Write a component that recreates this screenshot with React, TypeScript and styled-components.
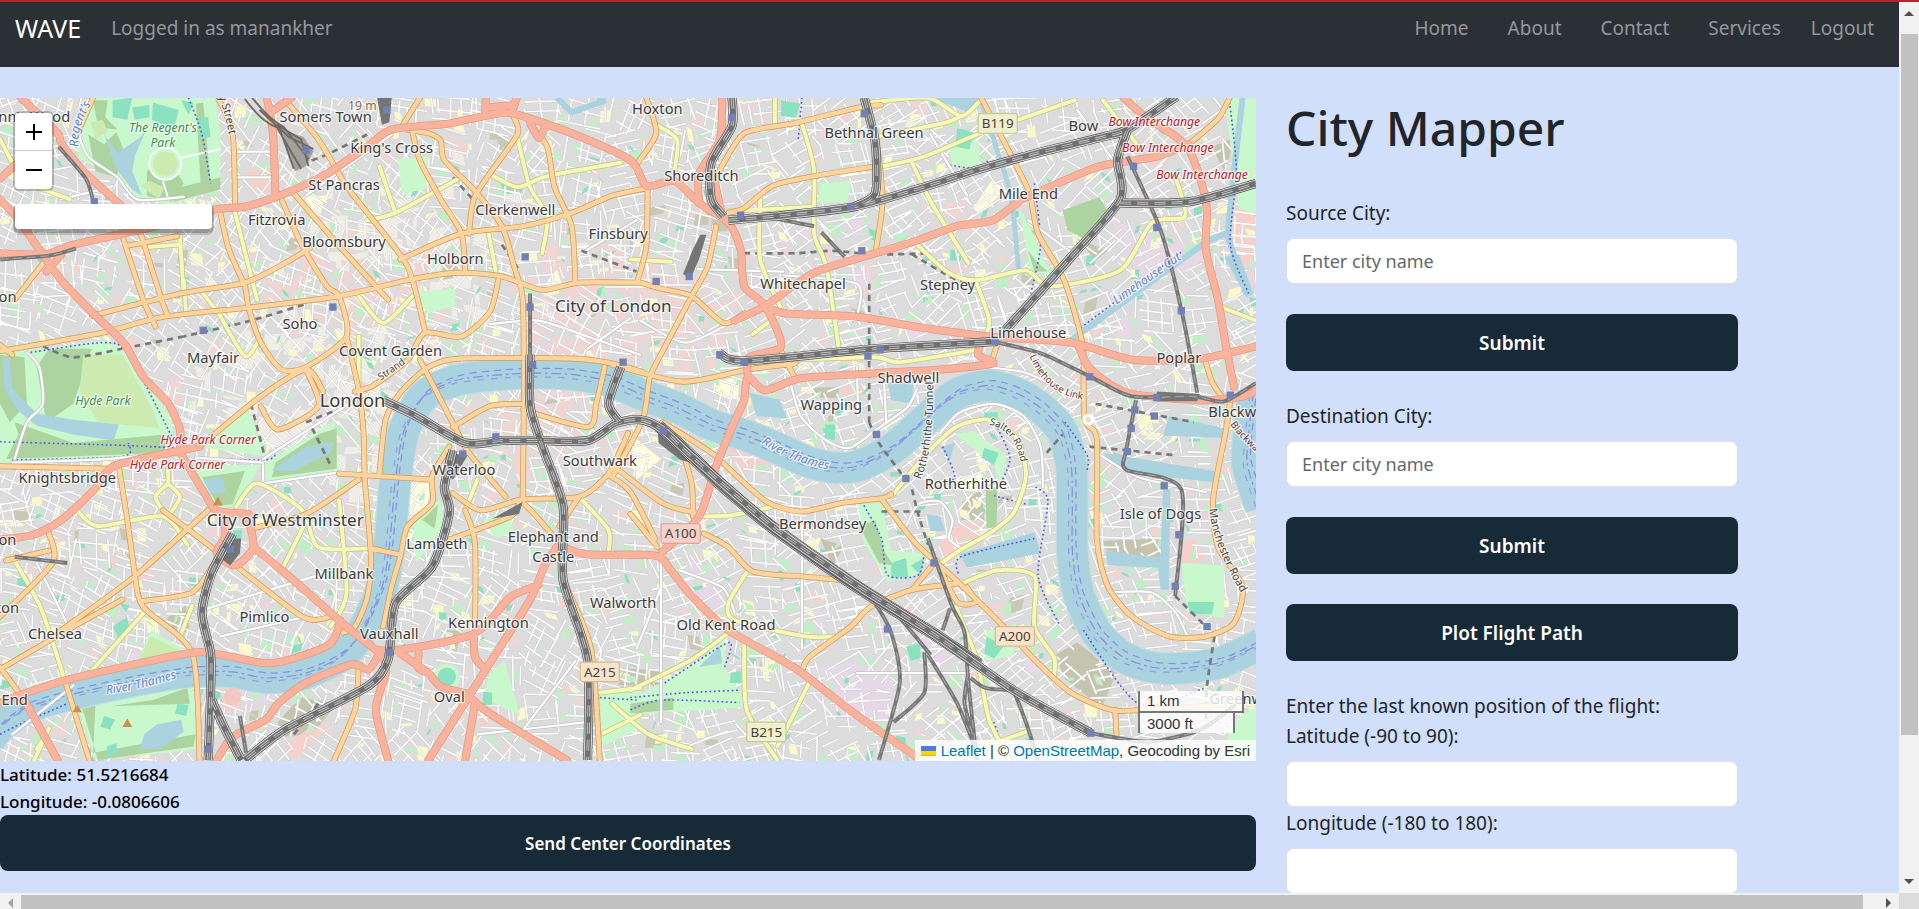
import React from "react";
import styled, { createGlobalStyle } from "styled-components";

const ui = `"Noto Sans", "Open Sans", sans-serif`;

const GlobalStyle = createGlobalStyle`
  *, *::before, *::after { box-sizing: border-box; }
  body {
    margin: 0;
    font-family: ${ui};
    font-size: 19px;
    line-height: 30px;
    color: #212529;
    background: #d2dffb;
  }
`;

/* ---------- page frame ---------- */

const Frame = styled.div`
  display: grid;
  grid-template-columns: minmax(0, 1fr) 20px;
  grid-template-rows: minmax(0, 1fr) 16px;
  height: 100vh;
  border-top: 2px solid #b3262c;
`;

const Viewport = styled.div`
  overflow: hidden;
`;

const Track = styled.div<{ $vertical?: boolean }>`
  display: flex;
  flex-direction: ${(p) => (p.$vertical ? "column" : "row")};
  align-items: center;
  background: #f1f1f1;
  padding: ${(p) => (p.$vertical ? "0 1px 0 2px" : "2px 0 0")};
`;

const Thumb = styled.div<{ $grow: number }>`
  flex: ${(p) => p.$grow} 1 0;
  align-self: stretch;
  background: #c1c1c1;
`;

const TrackRest = styled.div<{ $grow: number }>`
  flex: ${(p) => p.$grow} 1 0;
`;

const Arrow = styled.svg`
  flex: none;
`;

const Corner = styled.div`
  background: #dcdcdc;
`;

/* ---------- navigation ---------- */

const Navbar = styled.nav`
  display: flex;
  align-items: flex-start;
  height: 65px;
  padding: 6px 25px 0 15px;
  background: #2b3035;
  line-height: 40px;
`;

const Brand = styled.a`
  margin-right: 30px;
  font-size: 25px;
  color: #fff;
  text-decoration: none;
`;

const NavText = styled.span`
  color: #95989a;
`;

const NavLinks = styled.div`
  display: flex;
  gap: 39px;
  margin-left: auto;
`;

const NavLink = styled.a`
  color: #95989a;
  text-decoration: none;
`;

const LogoutLink = styled(NavLink)`
  margin-left: 30px;
`;

/* ---------- columns ---------- */

const Columns = styled.main`
  display: grid;
  grid-template-columns: 1256fr 643fr;
  padding-top: 31px;
`;

const MapColumn = styled.section`
  min-width: 0;
`;

const MapBox = styled.div`
  position: relative;
  height: 663px;
  overflow: hidden;
  background: #dddddd;
`;

const MapSvg = styled.svg`
  display: block;
  width: 100%;
  height: 100%;
`;

const Coordinate = styled.div`
  font-size: 17px;
  font-weight: 500;
  line-height: 27px;
  color: #000;
`;

const ActionButton = styled.button<{ $small?: boolean }>`
  display: block;
  width: 100%;
  height: ${(p) => (p.$small ? 56 : 57)}px;
  border: 0;
  border-radius: 8px;
  background: #172a38;
  color: #fff;
  font-family: ${ui};
  font-size: ${(p) => (p.$small ? 17 : 19)}px;
  font-weight: 600;
`;

const Side = styled.section`
  width: 100%;
  max-width: 482px;
  padding-left: 30px;
`;

const Title = styled.h1`
  margin: 0 0 40px;
  font-size: 48px;
  font-weight: 500;
  line-height: 60px;
`;

const Group = styled.div`
  display: flex;
  flex-direction: column;
  gap: 30px;
  margin-bottom: 30px;
`;

const Field = styled.div`
  display: flex;
  flex-direction: column;
  gap: 10px;
`;

const Fields = styled.div`
  display: flex;
  flex-direction: column;
  gap: 1px;
`;

const TextInput = styled.input`
  width: 100%;
  height: 46px;
  padding: 0 15px;
  border: 1px solid #dee2e6;
  border-radius: 8px;
  background: #fff;
  color: #212529;
  font-family: ${ui};
  font-size: 18px;
  &::placeholder { color: #63686d; opacity: 1; }
`;

/* ---------- controls over the map ---------- */

const ZoomControl = styled.div`
  position: absolute;
  left: 15px;
  top: 15px;
  width: 37px;
  border-radius: 4px;
  box-shadow: 0 0 0 2px rgba(0, 0, 0, 0.22);
  background: #fff;
`;

const ZoomButton = styled.button`
  display: flex;
  align-items: center;
  justify-content: center;
  width: 100%;
  height: 38px;
  padding: 0;
  border: 0;
  border-bottom: 1px solid #ccc;
  background: none;
  &:last-child { border-bottom: 0; }
`;

const SearchBox = styled.input`
  position: absolute;
  left: 15px;
  top: 106px;
  width: 197px;
  height: 25px;
  padding: 0 6px;
  border: 0;
  border-radius: 4px;
  background: #fff;
  box-shadow: 0 2px 0 2px rgba(0, 0, 0, 0.2), 0 5px 0 1px rgba(0, 0, 0, 0.15);
`;

const Scale = styled.div`
  position: absolute;
  right: 12px;
  bottom: 28px;
  width: 106px;
  font: 15px/18px "Liberation Sans", Arial, sans-serif;
  color: #333;
`;

const ScaleLine = styled.div<{ $lower?: boolean }>`
  width: ${(p) => (p.$lower ? 97 : 106)}px;
  height: 22px;
  padding: ${(p) => (p.$lower ? "2px 0 0 7px" : "1px 0 0 7px")};
  border: solid #777;
  border-width: ${(p) => (p.$lower ? "2px 2px 0" : "0 2px 2px")};
  margin-top: ${(p) => (p.$lower ? "-2px" : "0")};
  background: rgba(255, 255, 255, 0.8);
`;

const Attribution = styled.div`
  position: absolute;
  right: 0;
  bottom: 0;
  display: flex;
  align-items: center;
  gap: 5px;
  height: 21px;
  padding: 0 6px;
  background: rgba(255, 255, 255, 0.8);
  font: 15px/21px "Liberation Sans", Arial, sans-serif;
  color: #333;
  white-space: pre;
  a { color: #0078a8; text-decoration: none; }
`;

/* ---------- map data ---------- */

type Line = number[];

// Smooth curve through a flat list of x, y pairs.
const curve = (p: Line): string => {
  const n = p.length / 2;
  const at = (i: number) => {
    const k = Math.max(0, Math.min(n - 1, i));
    return [p[k * 2], p[k * 2 + 1]];
  };
  let d = `M${p[0]} ${p[1]}`;
  for (let i = 0; i < n - 1; i++) {
    const [a, b, c, e] = [at(i - 1), at(i), at(i + 1), at(i + 2)];
    const f = (v: number) => v.toFixed(1);
    d += `C${f(b[0] + (c[0] - a[0]) / 8)} ${f(b[1] + (c[1] - a[1]) / 8)} ${f(c[0] - (e[0] - b[0]) / 8)} ${f(c[1] - (e[1] - b[1]) / 8)} ${c[0]} ${c[1]}`;
  }
  return d;
};
const curves = (l: Line[]) => l.map(curve).join("");
const area = (l: Line[]) =>
  l.map((p) => "M" + p.reduce((s, v, i) => s + (i ? (i % 2 ? " " : "L") : "") + v, "") + "Z").join("");

let seed = 20231;
const rnd = () => {
  seed = (seed * 1664525 + 1013904223) % 4294967296;
  return seed / 4294967296;
};

// Small street grids, each turned its own way.
const makeStreets = () => {
  let d = "";
  for (let cy = 90; cy < 630; cy += 33)
    for (let cx = 8; cx < 1035; cx += 36) {
      const a = rnd() * 0.9 - 0.45 + Math.sin(cx / 170) * 0.5;
      const ox = cx + rnd() * 10 - 5;
      const oy = cy + rnd() * 10 - 5;
      const put = (x1: number, y1: number, x2: number, y2: number) => {
        const r = (x: number, y: number) =>
          `${(ox + x * Math.cos(a) - y * Math.sin(a)).toFixed(1)} ${(oy + x * Math.sin(a) + y * Math.cos(a)).toFixed(1)}`;
        d += `M${r(x1, y1)}L${r(x2, y2)}`;
      };
      for (let y = -18; y < 19; y += 6 + rnd() * 6) put(-20 + rnd() * 16, y, 20 - rnd() * 16, y + rnd() * 3);
      for (let x = -20; x < 21; x += 6 + rnd() * 9) put(x, -18 + rnd() * 18, x + rnd() * 3, 18 - rnd() * 18);
    }
  return d;
};
const makePatches = (n: number, size: number, cx?: number, cy?: number, rad = 100) => {
  let d = "";
  for (let i = 0; i < n; i++) {
    const x = cx === undefined ? rnd() * 1026 : cx + (rnd() + rnd() - 1) * rad;
    const y = cy === undefined ? 80 + rnd() * 542 : cy + (rnd() + rnd() - 1) * rad * 0.6;
    const w = 2 + rnd() * size;
    const h = 2 + rnd() * size;
    const k = rnd() * 6 - 3;
    d += `M${x.toFixed(1)} ${y.toFixed(1)}l${w.toFixed(1)} ${k.toFixed(1)}l${k.toFixed(1)} ${h.toFixed(1)}l${(-w).toFixed(1)} ${(-k).toFixed(1)}z`;
  }
  return d;
};
const streets = makeStreets();
const pinkPatches = makePatches(330, 10) + makePatches(150, 14, 515, 255, 110) + makePatches(70, 12, 440, 340, 80) + makePatches(60, 12, 280, 240, 90);
const greenPatches = makePatches(620, 9);
const tealPatches = makePatches(130, 7);
const creamPatches = makePatches(360, 10);
const khakiPatches = makePatches(60, 12);
const beigePatches = makePatches(110, 15, 260, 330, 130) + makePatches(90, 15, 330, 200, 150);
const tealOverlay = makePatches(110, 4);
const creamOverlay = makePatches(150, 5);
const greenOverlay = makePatches(200, 5);
const lilacPatches = makePatches(28, 13);

const river: Line[] = [
  [-8, 604, 0, 594, 22, 578, 60, 567, 110, 556, 155, 549, 190, 549, 217, 554, 250, 550, 280, 535, 298, 512, 312, 480, 318, 447, 323, 392, 330, 352, 346, 324, 372, 311, 400, 307, 433, 305, 467, 306, 500, 312, 523, 322, 555, 334, 581, 347, 607, 355, 632, 365, 659, 377, 680, 382, 700, 381, 727, 368, 754, 345, 768, 332, 785, 320, 809, 315, 832, 322, 852, 335, 868, 353, 875, 380, 876, 410, 876, 449, 881, 485, 896, 517, 916, 536, 940, 545, 965, 546, 998, 541, 1030, 526],
  [1024, 320, 1020, 355, 1019, 380, 1030, 415],
];

const primary: Line[] = [
  [17, 80, 47, 109, 50, 117, 67, 139, 90, 160, 100, 169],
  [0, 163, 13, 177, 30, 201, 50, 229, 73, 253, 93, 272, 103, 283, 117, 308, 137, 329, 147, 351, 147, 368, 152, 378, 167, 403, 177, 417, 203, 420],
  [183, 421, 184, 438, 177, 452, 192, 462, 207, 447, 202, 421], [207, 447, 235, 470, 267, 498, 283, 512, 307, 531],
  [0, 207, 37, 208, 60, 200, 127, 185, 177, 171, 200, 169, 233, 158, 267, 142, 300, 120, 320, 106, 367, 101, 400, 94, 420, 93, 467, 109, 515, 131, 528, 152, 551, 148, 571, 166, 595, 182, 605, 204, 608, 234, 625, 250, 638, 283, 612, 292, 611, 308],
  [38, 222, 50, 208], [218, 80, 223, 109, 225, 158], [221, 92, 238, 80], [0, 146, 18, 130], [397, 80, 396, 94], [422, 80, 418, 93],
  [397, 88, 420, 86], [432, 98, 440, 113, 446, 102],
  [590, 79, 588, 114, 571, 142, 571, 163], [583, 144, 590, 178],
  [600, 262, 625, 250, 665, 223, 715, 207, 748, 197, 781, 185, 811, 180, 835, 163, 855, 154, 898, 136, 945, 128, 971, 118],
  [918, 80, 935, 95, 961, 112, 971, 122, 980, 144, 986, 172, 985, 204, 995, 245, 1001, 280, 1008, 316],
  [625, 250, 641, 256, 701, 259, 748, 267, 808, 275, 875, 280, 925, 294, 981, 293, 1026, 283],
  [608, 327, 611, 308, 625, 319, 655, 309, 715, 305, 768, 302, 811, 297, 799, 290, 802, 278],
  [881, 283, 891, 302, 921, 321, 981, 327, 1015, 324, 1026, 319],
  [608, 327, 598, 349, 585, 381, 571, 422, 541, 451],
  [460, 447, 480, 453, 535, 454, 548, 466, 565, 487, 595, 515, 648, 545, 698, 583, 748, 618],
  [455, 447, 445, 462, 433, 490, 400, 542, 383, 569, 350, 621], [440, 478, 417, 488, 387, 518, 327, 531, 307, 531], [387, 518, 388, 537, 396, 546],
  [383, 569, 400, 583, 463, 621], [388, 575, 380, 621], [327, 534, 350, 550, 360, 561, 383, 567], [313, 535, 315, 550, 307, 580, 317, 621],
  [310, 534, 301, 547, 287, 543, 250, 558, 227, 575, 217, 588, 190, 602, 177, 621], [342, 534, 342, 546, 350, 550],
  [278, 507, 270, 526, 240, 538, 217, 542, 180, 535, 153, 534, 53, 556, 0, 574], [20, 572, 47, 621],
  [0, 441, 27, 437, 50, 425, 77, 400, 93, 381, 143, 369, 163, 365],
];

const secondary: Line[] = [
  [76, 80, 62, 112], [178, 80, 190, 109, 192, 169], [180, 174, 187, 204, 200, 234, 203, 251, 213, 280, 230, 302, 250, 300, 283, 275, 277, 242, 267, 234, 247, 201, 230, 163],
  [240, 158, 277, 201, 317, 245], [233, 82, 260, 114, 283, 152, 300, 174, 333, 218, 347, 270], [0, 287, 83, 272, 133, 259, 207, 251, 277, 242, 333, 229, 373, 223, 410, 226, 443, 237, 473, 231, 523, 231],
  [75, 258, 147, 240, 200, 231, 233, 215, 253, 203], [343, 80, 328, 104], [336, 104, 343, 131, 360, 163, 377, 191, 380, 223], [333, 106, 350, 109, 360, 115, 363, 131, 387, 155, 410, 185, 420, 218, 427, 245, 428, 321, 427, 408],
  [327, 212, 377, 191, 427, 185, 467, 174, 500, 160, 528, 154], [418, 93, 423, 109, 400, 142, 387, 163, 383, 191], [433, 103, 447, 120, 453, 153, 467, 185, 470, 230], [528, 80, 536, 109, 521, 133], [529, 152, 528, 201, 521, 229],
  [523, 231, 540, 236, 565, 242, 591, 264, 608, 256], [585, 185, 578, 218, 565, 242, 545, 280, 531, 308, 525, 343, 500, 390], [500, 298, 558, 312, 611, 302, 650, 297], [637, 285, 650, 310],
  [588, 139, 608, 109, 648, 101, 701, 88, 720, 86], [595, 174, 608, 170, 631, 152, 665, 144, 715, 136], [715, 106, 721, 163, 715, 207],
  [801, 79, 828, 131, 841, 158, 848, 191, 868, 226, 881, 267, 885, 289, 886, 343, 896, 359, 896, 441, 905, 479, 925, 504, 955, 520, 985, 520, 1008, 509, 1015, 479, 995, 447, 991, 408, 1001, 354, 1005, 327],
  [971, 118, 995, 97, 1005, 79], [984, 293, 990, 312, 998, 324], [815, 280, 810, 296],
  [541, 345, 581, 370, 605, 392, 628, 411, 655, 418, 688, 411, 721, 407, 728, 404], [721, 409, 748, 444, 781, 474, 815, 507, 848, 542, 875, 566, 908, 580, 935, 580, 1000, 576],
  [911, 580, 912, 600], [781, 477, 745, 482, 711, 496, 695, 512, 661, 537, 655, 550], [745, 482, 765, 458], [575, 436, 595, 447, 615, 467, 655, 471, 688, 474], [768, 465, 782, 492, 797, 492, 790, 480],
  [500, 380, 541, 411, 568, 419], [555, 360, 565, 395, 566, 422], [515, 420, 537, 447],
  [163, 365, 213, 324, 250, 302, 264, 320], [213, 332, 227, 351, 260, 332, 250, 302], [290, 320, 305, 315, 333, 294, 347, 272, 377, 275, 400, 255, 407, 229],
  [310, 387, 315, 343, 327, 321, 350, 300, 377, 293, 467, 293, 500, 297, 525, 304], [283, 275, 293, 319, 297, 354, 298, 392, 303, 455, 300, 488, 290, 512, 280, 517], [277, 387, 353, 392], [293, 392, 250, 420, 205, 432],
  [367, 365, 353, 389, 353, 411, 333, 430, 327, 455, 320, 479, 313, 512], [343, 294, 370, 346, 383, 370, 413, 406], [370, 349, 400, 332, 427, 330], [427, 335, 480, 349, 487, 330, 494, 300],
  [370, 403, 393, 417, 427, 408, 473, 406, 497, 387, 513, 354], [497, 388, 515, 402, 535, 440], [473, 406, 457, 430], [367, 441, 417, 422, 427, 411, 457, 444], [380, 417, 388, 444, 388, 518], [463, 480, 483, 531, 490, 621], [303, 448, 326, 453],
  [97, 381, 104, 425, 110, 468, 117, 496, 157, 534, 163, 621], [50, 515, 110, 471, 170, 417], [133, 417, 187, 458, 247, 504, 270, 504], [117, 491, 157, 484, 177, 457], [0, 381, 90, 383],
  [0, 547, 60, 512, 100, 490], [0, 545, 22, 575], [53, 556, 73, 621], [293, 545, 290, 580, 273, 621], [40, 436, 43, 460, 0, 504], [40, 450, 5, 458], [100, 193, 117, 245, 127, 267], [115, 191, 132, 245, 137, 258], [103, 201, 145, 193],
  [12, 245, 37, 213], [0, 282, 10, 290],
];

const tertiary: Line[] = [
  [192, 174, 210, 245], [147, 193, 150, 240], [120, 202, 147, 200], [300, 180, 323, 174, 373, 147], [310, 136, 323, 174], [403, 144, 423, 153, 447, 144, 507, 133], [423, 114, 433, 153, 447, 177, 443, 207], [0, 114, 20, 147, 57, 163],
  [399, 190, 405, 222], [633, 80, 633, 103], [534, 101, 553, 114, 551, 140], [655, 101, 665, 139, 665, 191, 675, 218, 685, 283], [621, 163, 621, 212, 638, 252], [591, 173, 665, 169], [711, 84, 758, 80, 785, 95, 801, 82], [715, 112, 770, 101, 785, 95],
  [721, 136, 755, 128, 801, 109, 878, 82], [745, 133, 761, 166, 791, 215], [748, 199, 775, 223, 798, 229, 838, 221, 858, 234, 915, 221, 941, 182, 968, 177, 961, 147], [798, 232, 808, 261, 805, 276], [615, 273, 638, 256], [648, 294, 715, 292, 735, 296, 798, 286],
  [901, 82, 928, 117], [995, 250, 1026, 262], [728, 406, 755, 373, 781, 349, 808, 343, 831, 359, 838, 389, 828, 419, 808, 436, 785, 449, 765, 463], [571, 422, 598, 421, 631, 414], [611, 466, 595, 493, 601, 507, 658, 520, 681, 520],
  [515, 564, 565, 539, 595, 517], [608, 523, 610, 580, 635, 621], [661, 558, 635, 610], [500, 575, 530, 600, 565, 612], [785, 477, 815, 466, 845, 471, 845, 512, 861, 537, 861, 553], [781, 496, 798, 539, 808, 588, 825, 621], [805, 610, 838, 598],
  [63, 417, 80, 430, 133, 422, 153, 445], [137, 384, 137, 395, 127, 406, 137, 420, 147, 406, 137, 395], [177, 253, 200, 291, 213, 275], [150, 229, 152, 256], [166, 240, 180, 258], [293, 242, 313, 264, 337, 242], [293, 275, 293, 319],
  [193, 414, 210, 395, 247, 417, 260, 447, 303, 448], [248, 430, 230, 466], [277, 409, 283, 485, 270, 512], [10, 455, 33, 496, 53, 556], [120, 498, 73, 550], [157, 495, 147, 520], [390, 392, 380, 417], [473, 406, 497, 433, 497, 452],
  [490, 566, 523, 562], [493, 599, 523, 584], [40, 595, 28, 621], [30, 612, 38, 600], [515, 212, 548, 214], [1005, 335, 1015, 340],
];

const whiteMain: Line[] = [
  [192, 124, 222, 124], [50, 163, 82, 155, 92, 152], [215, 375, 285, 330, 300, 322], [10, 378, 90, 375, 143, 369], [160, 374, 215, 378], [215, 380, 215, 395], [215, 395, 277, 386], [22, 288, 32, 300, 35, 330, 22, 345, 12, 375], [523, 262, 560, 280, 600, 262],
  [400, 265, 440, 262, 480, 275, 523, 290], [515, 260, 480, 285], [420, 606, 470, 540], [160, 500, 260, 470], [180, 520, 245, 505], [540, 440, 540, 590], [740, 430, 750, 412, 768, 410, 778, 425, 775, 440, 785, 448],
  [645, 310, 654, 340, 675, 360, 694, 366, 716, 351, 741, 333, 749, 318], [768, 354, 784, 337, 812, 330, 836, 340, 850, 365, 852, 398], [806, 300, 836, 304, 858, 314, 870, 325], [896, 370, 930, 390, 985, 402], [905, 484, 940, 484, 960, 500, 970, 520], [655, 430, 655, 530], [700, 550, 790, 550], [570, 220, 640, 222], [640, 225, 700, 232, 700, 260],
  [840, 180, 880, 210], [760, 110, 790, 160], [880, 90, 930, 160], [30, 460, 60, 520], [10, 600, 60, 560], [390, 600, 480, 590], [555, 466, 590, 480, 600, 500], [540, 480, 520, 530], [520, 180, 470, 210], [722, 310, 724, 345], [700, 300, 701, 340], [192, 145, 222, 145], [250, 160, 320, 110],
  [72, 82, 64, 105, 72, 128, 96, 145, 112, 163, 150, 161],
];

const railMain: Line[] = [
  [313, 327, 340, 340, 380, 362, 410, 360, 440, 360, 480, 360, 503, 346, 523, 343, 541, 351, 565, 373, 631, 430, 701, 479, 761, 517, 828, 564, 891, 599],
  [433, 290, 433, 332, 443, 365, 460, 414, 460, 474, 480, 539, 480, 621], [507, 300, 497, 330, 507, 346], [370, 368, 363, 398, 367, 419, 353, 463, 323, 493, 317, 539, 300, 561, 233, 596, 200, 621],
  [190, 436, 173, 468, 165, 501, 172, 534, 172, 566, 170, 621], [173, 572, 183, 594, 197, 621], [598, 80, 598, 103, 581, 133, 581, 163, 591, 177],
  [595, 180, 641, 176, 698, 169, 748, 155, 798, 139, 848, 125, 901, 112, 921, 106, 961, 79], [706, 80, 715, 117, 715, 158, 698, 169], [921, 106, 913, 131, 915, 163, 875, 210, 821, 270], [915, 166, 971, 165, 1026, 150], [588, 289, 608, 295, 715, 285, 815, 279],
];
const viaduct: Line[] = [[538, 348, 560, 368, 588, 395, 631, 431, 701, 480, 761, 517, 800, 543]];
const railThin: Line[] = [
  [433, 240, 433, 297], [815, 280, 851, 289, 891, 308, 925, 324, 975, 324, 1000, 328, 1026, 313], [921, 128, 948, 188, 965, 253, 978, 321], [928, 327, 920, 368, 920, 384, 965, 400, 960, 487],
  [758, 440, 765, 460, 778, 496, 788, 517, 791, 558, 798, 621], [715, 493, 728, 517, 735, 558, 718, 621], [758, 535, 782, 575, 798, 615], [755, 533, 755, 566, 730, 590], [776, 497, 770, 515], [791, 550, 788, 575, 798, 612], [793, 554, 805, 562, 828, 564],
  [828, 564, 838, 590, 848, 621], [711, 483, 735, 505, 760, 535], [891, 599, 938, 606, 981, 596, 1010, 575], [625, 177, 665, 185], [671, 190, 690, 210], [196, 585, 201, 615], [48, 120, 70, 146, 76, 164],
  [0, 212, 40, 209, 62, 203], [12, 455, 55, 460],
];
const railDashed: Line[] = [
  [608, 207, 650, 207, 680, 205, 715, 208, 760, 207], [745, 208, 780, 228, 800, 232], [745, 400, 750, 420, 758, 445], [710, 345, 718, 362, 740, 392], [960, 487, 985, 512], [992, 520, 986, 560, 985, 590], [895, 330, 975, 345], [890, 365, 960, 372],
  [35, 283, 60, 292, 100, 285], [150, 275, 110, 283], [248, 249, 205, 262, 150, 275], [205, 330, 216, 372], [255, 350, 270, 380], [250, 345, 275, 335], [300, 110, 270, 125, 250, 133], [410, 200, 425, 222], [475, 205, 520, 222], [260, 575, 240, 600],
  [370, 145, 388, 165], [855, 370, 868, 355], [710, 232, 710, 345], [720, 418, 752, 418],
];

const parks: Line[] = [
  [72, 80, 60, 108, 65, 130, 100, 147, 113, 163, 140, 167, 180, 155, 180, 109, 176, 80],
  [0, 289, 87, 278, 103, 286, 140, 343, 143, 362, 100, 373, 0, 379], [163, 365, 203, 335, 217, 373], [217, 378, 273, 344, 277, 384, 217, 394], [157, 380, 213, 380, 193, 413, 177, 416],
  [63, 575, 120, 568, 157, 556, 163, 612, 77, 621], [515, 572, 568, 542, 592, 523, 592, 545, 606, 568, 606, 578, 515, 584], [701, 412, 721, 411, 728, 450, 757, 452, 745, 472, 725, 475, 706, 444],
  [965, 460, 1000, 462, 1000, 505, 970, 500], [123, 515, 150, 530, 112, 542], [670, 150, 695, 148, 692, 166, 668, 165], [775, 120, 800, 115, 800, 138, 778, 136], [836, 175, 848, 200, 858, 225, 842, 222, 832, 170],
  [333, 239, 372, 236, 372, 250, 350, 256], [400, 550, 412, 540, 425, 585, 395, 570], [1005, 590, 1026, 578, 1026, 621, 1000, 621], [780, 355, 795, 352, 822, 372, 818, 400, 812, 380], [490, 568, 523, 562, 523, 595, 492, 610],
  [325, 130, 350, 128, 348, 155, 328, 158], [1000, 80, 1026, 80, 1026, 175, 1012, 170], [395, 425, 415, 418, 420, 435, 405, 440], [337, 425, 360, 408, 362, 430, 340, 460], [806, 515, 830, 510, 828, 536, 804, 540],
];
const woods: Line[] = [
  [72, 110, 85, 118, 95, 108, 102, 125, 95, 145, 78, 140], [76, 82, 88, 82, 86, 96, 96, 106, 80, 104], [120, 140, 135, 125, 150, 150, 140, 165, 120, 160], [160, 85, 166, 84, 172, 150, 164, 152], [140, 155, 180, 145, 180, 155, 142, 165], [0, 290, 20, 292, 22, 330, 8, 345, 0, 330], [40, 285, 75, 285, 60, 330, 38, 345, 30, 300],
  [12, 345, 60, 362, 135, 355, 135, 370, 5, 375, 15, 355], [225, 378, 260, 355, 275, 350, 275, 383, 222, 390], [165, 390, 200, 385, 190, 412, 178, 413], [67, 578, 78, 575, 76, 615, 160, 600, 158, 610, 80, 621], [90, 577, 125, 572, 153, 562, 155, 575, 120, 576],
  [868, 172, 898, 161, 905, 173, 885, 195, 872, 188], [702, 430, 715, 425, 722, 450, 730, 462, 718, 460], [805, 400, 815, 398, 814, 430, 806, 432], [840, 205, 848, 215, 856, 222, 845, 222], [515, 575, 550, 570, 550, 580, 515, 583], [345, 425, 358, 412, 355, 432],
];
const meadows: Line[] = [[68, 290, 100, 290, 125, 335, 130, 350, 80, 345, 65, 320], [112, 541, 123, 520, 148, 532], [74, 100, 84, 98, 88, 108, 78, 114], [115, 152, 122, 148, 134, 153, 130, 163]];
const pitches: Line[] = [[92, 82, 108, 80, 104, 98, 92, 96], [108, 88, 122, 86, 122, 96, 110, 98], [125, 84, 146, 90, 142, 106, 124, 98], [148, 82, 158, 84, 154, 94], [162, 96, 170, 96, 172, 112, 164, 114], [92, 512, 104, 504, 106, 516, 98, 524], [97, 492, 106, 495, 103, 500], [728, 460, 740, 456, 742, 472, 728, 472], [744, 462, 755, 456, 752, 470], [970, 492, 992, 492, 990, 502, 972, 502], [597, 550, 605, 548, 606, 558, 596, 558], [782, 105, 795, 108, 792, 122, 780, 120], [804, 337, 815, 337, 815, 343, 804, 343], [804, 366, 816, 370, 812, 380, 802, 374], [806, 520, 820, 528, 812, 538, 804, 534], [740, 528, 752, 526, 752, 538, 744, 540], [395, 565, 402, 566, 402, 576, 394, 576], [85, 585, 94, 588, 90, 596, 82, 594], [87, 610, 95, 607, 96, 616, 88, 618], [145, 575, 154, 576, 152, 585, 143, 583], [638, 82, 654, 85, 650, 96, 638, 95], [674, 347, 682, 347, 682, 360, 674, 358]];
const docks: Line[] = [
  [784, 453, 845, 435, 850, 452, 790, 464], [903, 450, 948, 456, 950, 400, 956, 400, 955, 482, 948, 482, 946, 464, 905, 462], [901, 370, 992, 385, 992, 394, 918, 386], [955, 340, 1000, 350, 1000, 358, 950, 356], [2, 293, 8, 293, 10, 318, 30, 338, 60, 343, 97, 347, 93, 360, 60, 355, 30, 348, 14, 335, 4, 318],
  [222, 384, 250, 365, 273, 361, 270, 370, 240, 385], [85, 110, 96, 125, 115, 112, 120, 105, 110, 128, 108, 140, 116, 160, 108, 155, 95, 138, 88, 118], [166, 392, 182, 390, 184, 402, 172, 404], [118, 600, 128, 592, 148, 588, 150, 598, 130, 612, 114, 612], [571, 545, 588, 528, 590, 542],
  [612, 321, 637, 327, 643, 342, 618, 340], [725, 313, 746, 313, 745, 330, 728, 327], [757, 420, 768, 422, 772, 434, 760, 434], [760, 80, 800, 80, 792, 92], [1000, 210, 1012, 208, 1024, 240, 1018, 243], [768, 365, 780, 362, 776, 376],
];
const industrial: Line[] = [[910, 180, 945, 195, 985, 200, 975, 222, 920, 225], [648, 550, 690, 540, 730, 552, 728, 590, 690, 590, 665, 562], [565, 452, 592, 495, 590, 500, 560, 480], [195, 560, 225, 560, 225, 572, 200, 574], [750, 510, 780, 520, 770, 545, 750, 535]];
const brown: Line[] = [[880, 525, 912, 550, 900, 578, 870, 555, 862, 535], [900, 442, 948, 440, 948, 458, 905, 450], [136, 505, 152, 495, 155, 515, 145, 518], [786, 410, 802, 400, 804, 425, 785, 425], [227, 590, 245, 570, 275, 575, 255, 600, 230, 602], [510, 546, 540, 548, 540, 560, 505, 560], [670, 440, 690, 446, 680, 462], [880, 195, 905, 205, 895, 213], [360, 515, 378, 515, 372, 534], [662, 317, 686, 316, 684, 325, 664, 325], [990, 120, 1010, 112, 1000, 140]];
const pinkZones: Line[] = [[1000, 190, 1012, 168, 1026, 174, 1026, 215, 1010, 218], [765, 448, 775, 460, 800, 442, 805, 425, 780, 430], [963, 444, 975, 440, 985, 458, 965, 463], [700, 480, 715, 480, 715, 495], [180, 565, 195, 565, 197, 580, 182, 582], [232, 610, 255, 593, 262, 600, 240, 621], [595, 360, 628, 368, 622, 388, 600, 380], [185, 80, 193, 82, 196, 92, 186, 94], [390, 583, 403, 585, 395, 598], [202, 140, 223, 136, 220, 158, 205, 155], [687, 316, 708, 314, 708, 324, 689, 324]];
const creamZones: Line[] = [[334, 395, 352, 395, 348, 420, 334, 428], [785, 390, 805, 385, 800, 402, 780, 400], [250, 160, 265, 160, 262, 175, 248, 172], [447, 230, 455, 220, 460, 236, 448, 240], [0, 430, 20, 430, 15, 425, 0, 425], [795, 170, 810, 148, 822, 155, 800, 175], [515, 355, 540, 375, 520, 392], [796, 362, 812, 372, 806, 384, 798, 378], [584, 312, 604, 308, 603, 327, 586, 322]];

const bluePaths: Line[] = [
  [25, 288, 85, 280, 105, 290, 143, 362], [0, 361, 100, 364, 143, 366], [10, 376, 100, 373, 105, 362], [160, 374, 215, 376, 225, 372], [515, 570, 560, 566, 604, 564], [540, 560, 595, 525, 592, 545], [515, 580, 540, 572, 604, 574], [704, 410, 720, 440, 725, 470, 750, 470, 755, 452],
  [770, 365, 780, 390, 765, 395], [846, 398, 856, 410, 848, 470, 865, 510], [880, 270, 920, 240, 965, 206], [845, 150, 850, 200, 842, 240], [845, 440, 785, 455, 783, 470], [885, 515, 930, 575, 985, 562], [1004, 80, 1010, 140, 1005, 200, 1020, 240], [0, 600, 20, 590, 55, 575],
  [655, 80, 652, 115], [154, 80, 165, 110, 172, 150], [812, 590, 822, 620], [776, 135, 800, 138, 808, 130], [490, 570, 520, 572], [815, 350, 825, 375, 815, 400], [870, 345, 888, 372, 888, 385], [812, 405, 838, 412],
];

const stations: Line = [250, 123, 166, 270, 272, 251, 433, 251, 316, 90, 598, 96, 706, 93, 605, 176, 695, 169, 704, 205, 536, 230, 563, 226, 588, 290, 608, 296, 709, 291, 719, 286, 813, 279, 926, 136, 945, 186, 965, 254, 890, 308, 945, 325, 1005, 323, 435, 298, 509, 296, 405, 357, 378, 371, 188, 449, 318, 533, 170, 612, 542, 352, 716, 355, 740, 391, 763, 460, 725, 514, 891, 599, 927, 335, 943, 340, 924, 350, 921, 369, 951, 397, 963, 437, 960, 479, 986, 512, 429, 210, 77, 165];

type Label = [string, number, number, number?];
const labels: Label[] = [
  ["Hoxton", 537, 93], ["Bethnal Green", 714, 113], ["Bow", 885, 107], ["Somers Town", 266, 100], ["King's Cross", 320, 125], ["St Pancras", 281, 155], ["Shoreditch", 573, 148], ["Clerkenwell", 421, 176], ["Fitzrovia", 226, 184], ["Finsbury", 505, 195],
  ["Bloomsbury", 281, 202], ["Holborn", 372, 216], ["Mile End", 840, 163], ["Whitechapel", 656, 236], ["Stepney", 774, 237], ["City of London", 501, 255, 14], ["Soho", 245, 269], ["Limehouse", 840, 276], ["Mayfair", 174, 297], ["Covent Garden", 319, 291],
  ["Poplar", 963, 297], ["Shadwell", 742, 313], ["London", 288, 333, 15], ["Wapping", 679, 335], ["Blackwall", 1013, 341], ["Knightsbridge", 55, 395], ["Waterloo", 379, 388], ["Southwark", 490, 381], ["Rotherhithe", 789, 400], ["City of Westminster", 233, 430, 14],
  ["Lambeth", 357, 449], ["Elephant and", 452, 443], ["Castle", 452, 459], ["Bermondsey", 672, 432], ["Isle of Dogs", 948, 424], ["Millbank", 281, 473], ["Walworth", 509, 497], ["Pimlico", 216, 508], ["Old Kent Road", 593, 515], ["Chelsea", 45, 522],
  ["Vauxhall", 318, 522], ["Kennington", 399, 513], ["Oval", 367, 574], ["End", 12, 576], ["on", 6, 445], ["ton", 6, 501], ["ton", 4, 247], ["nn's Wood", 28, 100], ["Greenwich", 1018, 575],
];
const redLabels: Label[] = [["Bow Interchange", 943, 103], ["Bow Interchange", 954, 124], ["Bow Interchange", 982, 146], ["Hyde Park Corner", 170, 363], ["Hyde Park Corner", 145, 383]];
const shields: [string, number, number, string, string][] = [["B119", 815, 101, "#eff0cf", "#c5c98e"], ["A100", 556, 436, "#f3d1ca", "#e0a294"], ["A200", 829, 520, "#f6e3cb", "#dcb98a"], ["A215", 490, 549, "#f6e3cb", "#dcb98a"], ["B215", 626, 598, "#eff0cf", "#c5c98e"]];

const HaloText = styled.text<{ $italic?: boolean; $fill?: string; $along?: boolean }>`
  font-family: "Noto Sans", sans-serif;
  font-style: ${(p) => (p.$italic ? "italic" : "normal")};
  fill: ${(p) => p.$fill ?? "#3c3c3c"};
  stroke: rgba(255, 255, 255, 0.7);
  stroke-width: 2px;
  stroke-linejoin: round;
  paint-order: stroke;
  text-anchor: ${(p) => (p.$along ? "start" : "middle")};
`;

const Road = ({ d, width, fill, casing }: { d: string; width: number; fill: string; casing: string }) => (
  <g fill="none" strokeLinecap="round" strokeLinejoin="round">
    <path d={d} stroke={casing} strokeWidth={width + 1.2} />
    <path d={d} stroke={fill} strokeWidth={width} />
  </g>
);

const riverPath = curves(river);
const railPath = curves(railMain);
const thinPath = curves(railThin);
const viaductPath = curves(viaduct);

const pathLabels: [string, string, string, number, boolean][] = [
  ["thamesWest", "River Thames", "#6b86c4", 10, true], ["thamesEast", "River Thames", "#6b86c4", 10, true], ["cut", "Limehouse Cut", "#6b86c4", 10, true],
  ["tunnel", "Rotherhithe Tunnel", "#444", 9, false], ["salter", "Salter Road", "#444", 8, false], ["manchester", "Manchester Road", "#444", 9, false],
  ["limelink", "Limehouse Link", "#6a3230", 8, false], ["black", "Blackwall", "#6a3230", 8, false], ["strand", "Strand", "#444", 8, false],
  ["street", "ry Street", "#444", 9, false], ["regents", "Regent's", "#5b86c8", 10, true],
];

const CityMap = () => (
  <MapSvg viewBox="0 80 1026 542" preserveAspectRatio="xMidYMid slice" role="img" aria-label="Map of London">
    <rect x="-50" y="60" width="1130" height="590" fill="#dddcdc" />
    <path d={beigePatches} fill="#f0ede6" />
    <path d={pinkPatches} fill="#f2d5d3" />
    <path d={lilacPatches} fill="#ead9e8" />
    <path d={khakiPatches} fill="#c9c8b4" />
    <path d={area(industrial)} fill="#e6d8e6" />
    <path d={area(brown)} fill="#c5c4af" />
    <path d={area(pinkZones)} fill="#f8d0cb" />
    <path d={area(creamZones)} fill="#fffddf" />
    <path d={creamPatches} fill="#fcf9cc" />
    <path d={greenPatches} fill="#c0efc6" />
    <path d={tealPatches} fill="#8de0bf" />
    <path d={streets} fill="none" stroke="#c9c8c8" strokeWidth="2" />
    <path d={streets} fill="none" stroke="#fff" strokeWidth="1.3" />
    <path d={greenOverlay} fill="#c0efc6" />
    <path d={creamOverlay} fill="#fcf9cc" />
    <path d={tealOverlay} fill="#8de0bf" />
    <path d={area(parks)} fill="#c8f8cc" />
    <path d={area(woods)} fill="#add3a0" />
    <path d={area(meadows)} fill="#cdebb0" />
    <path d={area(pitches)} fill="#8ae2c1" />
    <path d={area(docks)} fill="#aad3df" />
    <g fill="none" strokeLinejoin="round">
      <path d={riverPath} stroke="#c6dce1" strokeWidth="27" />
      <path d={riverPath} stroke="#aad3df" strokeWidth="25" />
      <path d={riverPath} stroke="#8a8ed8" strokeWidth="1" strokeDasharray="8 3 2 3" />
      <path d={riverPath} stroke="#7f92ee" strokeWidth="1" strokeDasharray="6 4" transform="translate(3 -4)" />
      <path d={riverPath} stroke="#8f9fe8" strokeWidth="1" strokeDasharray="5 6" transform="translate(-3 3)" />
      <path d="M800 79Q808 100 815 125Q825 150 828 175L832 220" stroke="#aad3df" strokeWidth="4" />
      <path d="M875 278L985 198L1003 190L1008 140L1015 80M1002 190L1018 240M455 80L467 92L495 82" stroke="#aad3df" strokeWidth="5" />
    </g>
    <circle cx="135" cy="134" r="13" fill="#c8f8cc" stroke="#fff" strokeWidth="1.5" />
    <circle cx="135" cy="134" r="10" fill="#cdebb0" />
    <circle cx="365" cy="553" r="9" fill="#8ae2c1" stroke="#c8f8cc" strokeWidth="3" />
    <circle cx="190" cy="569" r="7" fill="#f5c7c2" />
    <path d="M148 129L180 122M133 148L138 164" stroke="#fff" strokeWidth="1.5" />
    <path d={curves(bluePaths)} fill="none" stroke="#4a55f0" strokeWidth="1.3" strokeDasharray="1.4 2.2" />
    <Road d={curves(whiteMain)} width={1.8} fill="#ffffff" casing="#c4c3c3" />
    <path d={curves(railDashed)} fill="none" stroke="#777" strokeWidth="2.2" strokeDasharray="5 4" />
    <Road d={curves(tertiary)} width={3.2} fill="#f5f8b8" casing="#c3c584" />
    <Road d={curves(secondary)} width={3.6} fill="#fcd4a0" casing="#cf9c55" />
    <Road d={curves(primary)} width={5.4} fill="#f9b29c" casing="#e69a86" />
    <path d="M230 106L248 112L256 124L250 136L241 140L236 128Z" fill="#a39f9b" />
    <path d="M200 81Q214 100 226 104L246 138M206 80Q220 98 232 104L252 130M212 90L236 112L256 122M228 104L240 138M226 102L246 114L252 136" stroke="#6d6966" strokeWidth="1.5" fill="none" />
    <path d="M577 192L571 212L564 228L558 224L566 204L572 192Z M308 80L320 80L318 100L312 102Z M186 440L197 440L196 452L188 462L180 456Z M537 348L560 366L572 380L556 376L538 362Z M365 370L382 372L370 392L362 385Z M945 320L980 322L978 328L945 328Z M402 424L427 410L424 420Z" fill="#757575" />
    <g fill="none" strokeLinejoin="round">
      <path d={thinPath} stroke="#777" strokeWidth="3.2" />
      <path d={thinPath} stroke="#b4b4b4" strokeWidth="0.7" strokeDasharray="7 4" />
      <path d={viaductPath} stroke="#4c4c4c" strokeWidth="10" />
      <path d={viaductPath} stroke="#d4d4d4" strokeWidth="9" />
      <path d={viaductPath} stroke="#666" strokeWidth="8" />
      <path d={viaductPath} stroke="#bbb" strokeWidth="5.4" />
      <path d={railPath} stroke="#4c4c4c" strokeWidth="7.4" />
      <path d={railPath} stroke="#dadada" strokeWidth="6.4" />
      <path d={railPath} stroke="#707070" strokeWidth="4.8" />
      <path d={railPath} stroke="#cfcfcf" strokeWidth="2.2" strokeDasharray="9 5" />
      <path d={railPath} stroke="#707070" strokeWidth="0.9" />
    </g>
    {stations.map((v, i) => (i % 2 ? null : <rect key={i} x={v - 3} y={stations[i + 1] - 3} width="6" height="6" fill="#7480b4" />))}
    <circle cx="889" cy="343" r="3.5" fill="#ddd" stroke="#fff" strokeWidth="2.5" />
    <path d="M178 406l4 7h-8zM63 576l4 6h-8zM104 587l4 7h-8z" fill="#c98f4c" />
    {labels.map(([t, x, y, s]) => (
      <HaloText key={t + x + y} x={x} y={y} fontSize={s ?? 12}>{t}</HaloText>
    ))}
    {redLabels.map(([t, x, y]) => (
      <HaloText key={t + x + y} x={x} y={y} fontSize="10" $italic $fill="#b5232f">{t}</HaloText>
    ))}
    <HaloText x="133" y="108" fontSize="10" $italic $fill="#3f8f52">The Regent's</HaloText>
    <HaloText x="133" y="120" fontSize="10" $italic $fill="#3f8f52">Park</HaloText>
    <HaloText x="84" y="331" fontSize="10" $italic $fill="#3f8f52">Hyde Park</HaloText>
    <HaloText x="296" y="90" fontSize="10" $fill="#8a6a4a">19 m</HaloText>
    <defs>
      <path id="thamesWest" d="M87 567Q115 564 150 552" />
      <path id="thamesEast" d="M622 362Q648 380 690 386" />
      <path id="cut" d="M912 249L972 207" />
      <path id="tunnel" d="M752 392Q764 365 762 300" />
      <path id="salter" d="M808 347Q832 352 835 386" />
      <path id="manchester" d="M988 416Q990 445 1016 488" />
      <path id="limelink" d="M841 291Q855 325 890 327" />
      <path id="black" d="M1005 347Q1012 358 1040 382" />
      <path id="strand" d="M311 311L340 291" />
      <path id="street" d="M177 76Q184 90 188 116" />
      <path id="regents" d="M64 120Q62 102 80 76" />
    </defs>
    {pathLabels.map(([id, t, fill, s, italic]) => (
      <HaloText key={id} fontSize={s} $fill={fill} $italic={italic} $along>
        <textPath href={"#" + id}>{t}</textPath>
      </HaloText>
    ))}
    {shields.map(([t, x, y, bg, line]) => (
      <g key={t}>
        <rect x={x - 16} y={y - 8} width="32" height="16" rx="1.5" fill={bg} stroke={line} />
        <text x={x} y={y + 4} fontSize="11" fontFamily="Noto Sans, sans-serif" fill="#4a4238" textAnchor="middle">{t}</text>
      </g>
    ))}
  </MapSvg>
);

export default function App() {
  return (
    <>
      <GlobalStyle />
      <Frame>
        <Viewport>
          <Navbar>
            <Brand href="#">WAVE</Brand>
            <NavText>Logged in as manankher</NavText>
            <NavLinks>
              <NavLink href="#">Home</NavLink>
              <NavLink href="#">About</NavLink>
              <NavLink href="#">Contact</NavLink>
              <NavLink href="#">Services</NavLink>
            </NavLinks>
            <LogoutLink href="#">Logout</LogoutLink>
          </Navbar>
          <Columns>
            <MapColumn>
              <MapBox>
                <CityMap />
                <ZoomControl>
                  <ZoomButton aria-label="Zoom in">
                    <svg width="16" height="16" viewBox="0 0 16 16"><path d="M8 0V16M0 8H16" stroke="#000" strokeWidth="2" /></svg>
                  </ZoomButton>
                  <ZoomButton aria-label="Zoom out">
                    <svg width="16" height="16" viewBox="0 0 16 16"><path d="M0 8H16" stroke="#000" strokeWidth="2" /></svg>
                  </ZoomButton>
                </ZoomControl>
                <SearchBox aria-label="Search the map" />
                <Scale>
                  <ScaleLine>1 km</ScaleLine>
                  <ScaleLine $lower>3000 ft</ScaleLine>
                </Scale>
                <Attribution>
                  <svg width="15" height="10" viewBox="0 0 15 10"><path fill="#4c7be1" d="M0 0h15v5H0z" /><path fill="#ffd500" d="M0 5h15v4H0z" /><path fill="#e0bc00" d="M0 9h15v1H0z" /></svg>
                  <span><a href="#">Leaflet</a> | © <a href="#">OpenStreetMap</a>, Geocoding by Esri</span>
                </Attribution>
              </MapBox>
              <Coordinate>Latitude: 51.5216684</Coordinate>
              <Coordinate>Longitude: -0.0806606</Coordinate>
              <ActionButton $small>Send Center Coordinates</ActionButton>
            </MapColumn>
            <Side>
              <Title>City Mapper</Title>
              <Group>
                <Field>
                  <label htmlFor="source">Source City:</label>
                  <TextInput id="source" placeholder="Enter city name" />
                </Field>
                <ActionButton>Submit</ActionButton>
              </Group>
              <Group>
                <Field>
                  <label htmlFor="destination">Destination City:</label>
                  <TextInput id="destination" placeholder="Enter city name" />
                </Field>
                <ActionButton>Submit</ActionButton>
                <ActionButton>Plot Flight Path</ActionButton>
              </Group>
              <div>Enter the last known position of the flight:</div>
              <Fields>
                <Field>
                  <label htmlFor="lat">Latitude (-90 to 90):</label>
                  <TextInput id="lat" />
                </Field>
                <Field>
                  <label htmlFor="lng">Longitude (-180 to 180):</label>
                  <TextInput id="lng" />
                </Field>
              </Fields>
            </Side>
          </Columns>
        </Viewport>
        <Track $vertical aria-hidden>
          <Arrow width="17" height="32" viewBox="0 0 17 32"><path d="M8 9L13 14H3Z" fill="#505050" /></Arrow>
          <Thumb $grow={701} />
          <TrackRest $grow={134} />
          <Arrow width="17" height="24" viewBox="0 0 17 24"><path d="M3 10H13L8 15Z" fill="#505050" /></Arrow>
        </Track>
        <Track aria-hidden>
          <Arrow width="21" height="14" viewBox="0 0 21 14"><path d="M13 3V13L8 8Z" fill="#a3a3a3" /></Arrow>
          <Thumb $grow={1} />
          <Arrow width="36" height="14" viewBox="0 0 36 14"><path d="M23 3V13L28 8Z" fill="#505050" /></Arrow>
        </Track>
        <Corner />
      </Frame>
    </>
  );
}
